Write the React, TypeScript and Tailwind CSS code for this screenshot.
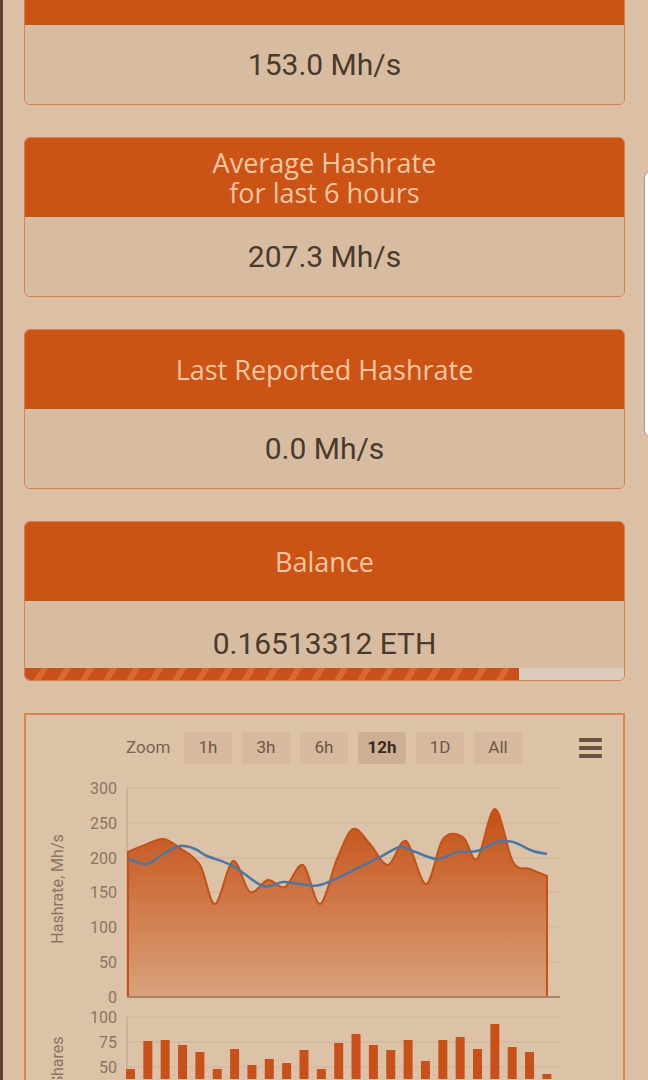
import React from "react";

type Pt = [number, number];

function smooth(pts: Pt[]): string {
  let d = `M${pts[0][0]},${pts[0][1]}`;
  for (let i = 0; i < pts.length - 1; i++) {
    const p0 = pts[i - 1] || pts[i];
    const p1 = pts[i];
    const p2 = pts[i + 1];
    const p3 = pts[i + 2] || p2;
    const c1x = p1[0] + (p2[0] - p0[0]) / 6;
    const c1y = p1[1] + (p2[1] - p0[1]) / 6;
    const c2x = p2[0] - (p3[0] - p1[0]) / 6;
    const c2y = p2[1] - (p3[1] - p1[1]) / 6;
    d += ` C${c1x.toFixed(1)},${c1y.toFixed(1)} ${c2x.toFixed(1)},${c2y.toFixed(1)} ${p2[0]},${p2[1]}`;
  }
  return d;
}

const orange: Pt[] = [
  [128, 853], [145, 846], [163, 840], [180, 849], [200, 866], [215, 905], [233, 862],
  [250, 893], [268, 881], [285, 888], [303, 866], [320, 905], [337, 860], [353, 830],
  [370, 845], [388, 866], [406, 842], [426, 885], [443, 840], [463, 838], [477, 860],
  [495, 810], [513, 863], [530, 870], [547, 877],
];

const blue: Pt[] = [
  [128, 860], [147, 865], [163, 855], [180, 847], [195, 850], [207, 857], [233, 867],
  [263, 887], [283, 883], [300, 885], [320, 886], [350, 873], [380, 858], [400, 848],
  [413, 852], [437, 860], [457, 853], [477, 852], [497, 843], [513, 843], [533, 852],
  [547, 855],
];

const bars = [48, 76, 77, 72, 65, 48, 68, 52, 58, 54, 67, 48, 74, 83, 72, 67, 77, 56, 77, 80, 68, 93, 70, 65, 43];

function Card({ title, value, bar }: { title?: React.ReactNode; value: string; bar?: boolean }) {
  return (
    <div className="flex flex-col overflow-hidden rounded-[6px] border border-[#d5834d]">
      <div className="flex h-[79px] flex-col items-center justify-center bg-[#cb5316] text-center font-['Open_Sans',sans-serif] text-[27px] leading-[30px] text-[#f7c8a1]">
        {title}
      </div>
      {bar ? (
        <div className="flex h-[79px] flex-col bg-[#d8bca1]">
          <div className="flex h-[67px] items-center justify-center pt-[18px] font-['Roboto',sans-serif] text-[30px] leading-none text-[#4b3a2c]">
            {value}
          </div>
          <div className="flex h-[12px]">
            <div className="h-full w-[82.5%] bg-[repeating-linear-gradient(-60deg,#c9501a_0px,#c9501a_14px,#d9692f_14px,#d9692f_20px)]" />
            <div className="h-full flex-1 bg-[#dccbbd]" />
          </div>
        </div>
      ) : (
        <div className="flex h-[79px] items-center justify-center bg-[#d8bca1] font-['Roboto',sans-serif] text-[30px] leading-none text-[#4b3a2c]">
          {value}
        </div>
      )}
    </div>
  );
}

function Chart() {
  const area = smooth(orange) + " L547,998 L128,998 Z";
  const grid1 = [789, 824, 859, 893, 928, 963];
  const labels1 = ["300", "250", "200", "150", "100", "50", "0"];
  const grid2 = [1018, 1043, 1068, 1093];
  const labels2 = ["100", "75", "50"];
  return (
    <svg width={598} height={308} viewBox="26 772 598 308" className="block">
      <defs>
        <linearGradient id="ag" x1="0" y1="0" x2="0" y2="1">
          <stop offset="0" stopColor="#c64f15" />
          <stop offset="1" stopColor="#d9a27c" />
        </linearGradient>
      </defs>
      {grid1.map((y) => (
        <line key={y} x1={127} x2={560} y1={y} y2={y} stroke="#cdb298" strokeWidth={1.2} />
      ))}
      <line x1={127} x2={127} y1={789} y2={998} stroke="#c7ab92" strokeWidth={1.5} />
      {labels1.map((l, i) => (
        <text key={l} x={117} y={789 + i * 34.8 + 6} textAnchor="end" fontFamily="Roboto, sans-serif" fontSize={16} fill="#8d7462">
          {l}
        </text>
      ))}
      <text transform="translate(63 890) rotate(-90)" textAnchor="middle" fontFamily="Roboto, sans-serif" fontSize={16} fill="#8d7462">
        Hashrate, Mh/s
      </text>
      <path d={area} fill="url(#ag)" stroke="#c2521a" strokeWidth={2} />
      <line x1={127} x2={560} y1={998} y2={998} stroke="#a98468" strokeWidth={2} />
      <path d={smooth(blue)} fill="none" stroke="#4a77a6" strokeWidth={2.5} />

      {grid2.map((y) => (
        <line key={y} x1={127} x2={560} y1={y} y2={y} stroke="#cdb298" strokeWidth={1.2} />
      ))}
      <line x1={127} x2={127} y1={1018} y2={1080} stroke="#c7ab92" strokeWidth={1.5} />
      {labels2.map((l, i) => (
        <text key={l} x={117} y={1018 + i * 25 + 6} textAnchor="end" fontFamily="Roboto, sans-serif" fontSize={16} fill="#8d7462">
          {l}
        </text>
      ))}
      <text transform="translate(63 1062) rotate(-90)" textAnchor="middle" fontFamily="Roboto, sans-serif" fontSize={16} fill="#8d7462">
        Shares
      </text>
      {bars.map((v, i) => (
        <rect key={i} x={126 + i * 17.35} y={1118 - v} width={9} height={v} fill="#c9501a" />
      ))}
    </svg>
  );
}

export default function App() {
  const btns = ["1h", "3h", "6h", "12h", "1D", "All"];
  return (
    <div className="relative h-[1080px] w-[648px] overflow-hidden border-l-[3px] border-[#5b4030] bg-[#dbc0a5]">
      <div className="-mt-[55px] flex flex-col gap-[32px] pl-[21px] pr-[23px]">
        <Card value="153.0 Mh/s" />
        <Card
          title={
            <>
              <span className="block leading-[30px]">Average Hashrate</span>
              <span className="block leading-[30px]">for last 6 hours</span>
            </>
          }
          value="207.3 Mh/s"
        />
        <Card title="Last Reported Hashrate" value="0.0 Mh/s" />
        <Card title="Balance" value="0.16513312 ETH" bar />
        <div className="h-[400px] border-2 border-[#d98550] bg-[#dcc2a7]">
          <div className="flex items-center pl-[100px] pr-[21px] pt-[17px] font-['Roboto',sans-serif] text-[17px]">
            <span className="w-[58px] text-[#7a6252]">Zoom</span>
            <div className="flex gap-[10px]">
              {btns.map((b) => (
                <div
                  key={b}
                  className={
                    b === "12h"
                      ? "flex h-[32px] w-[48px] items-center justify-center rounded-[2px] bg-[#ccaf95] font-bold text-[#3a2a1e]"
                      : "flex h-[32px] w-[48px] items-center justify-center rounded-[2px] bg-[#d6b99e] text-[#6e5646]"
                  }
                >
                  {b}
                </div>
              ))}
            </div>
            <div className="ml-auto flex w-[23px] flex-col gap-[4px]">
              <div className="h-[4px] rounded-[1px] bg-[#6b5242]" />
              <div className="h-[4px] rounded-[1px] bg-[#6b5242]" />
              <div className="h-[4px] rounded-[1px] bg-[#6b5242]" />
            </div>
          </div>
          <div className="mt-[7px]">
            <Chart />
          </div>
        </div>
      </div>
      <div className="absolute left-[641px] top-[170px] h-[268px] w-[20px] rounded-[8px] border border-[#a39a90] bg-white" />
    </div>
  );
}
